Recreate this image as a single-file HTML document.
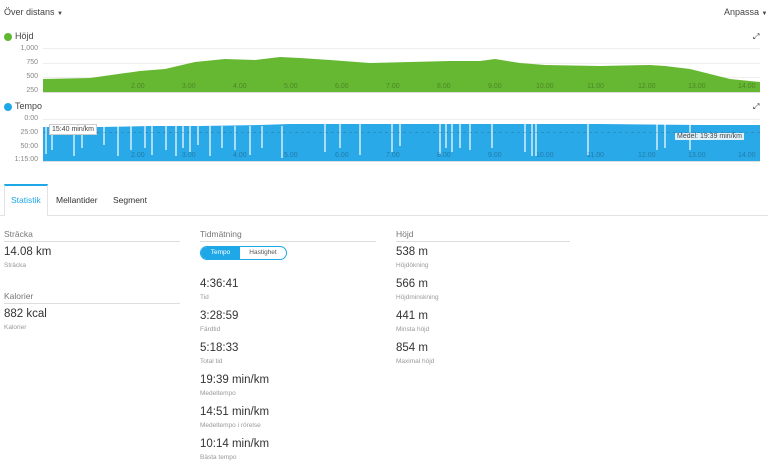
<!DOCTYPE html>
<html><head><meta charset="utf-8"><style>
*{margin:0;padding:0;box-sizing:border-box}
body{width:768px;height:476px;background:#fff;font-family:"Liberation Sans",sans-serif;color:#333;position:relative;overflow:hidden}
.a{position:absolute;white-space:nowrap}
.t{font-size:9px;color:#444}
.yl{font-size:7px;color:#888;text-align:right;width:36px;left:2px}
.xl{font-size:7px;color:rgba(0,0,0,0.28)}
.hd{font-size:8.5px;color:#777;border-bottom:1px solid #ddd;padding-bottom:2px}
.v{font-size:11.5px;color:#333}
.l{font-size:6.5px;color:#999}
.dot{width:8px;height:8px;border-radius:50%}
</style></head><body>
<div class="a t" style="left:4px;top:7px">Över distans <span style="font-size:6px">▼</span></div>
<div class="a t" style="left:724px;top:7px">Anpassa <span style="font-size:6px">▼</span></div>

<div class="a dot" style="left:4px;top:33px;background:#5fb832"></div>
<div class="a t" style="left:15px;top:31px">Höjd</div>
<div class="a" style="left:753px;top:32px;font-size:8px;color:#222">⤢</div>
<div class="a yl" style="top:45px">1,000</div>
<div class="a yl" style="top:59px">750</div>
<div class="a yl" style="top:73px">500</div>
<div class="a yl" style="top:87px">250</div>

<div class="a dot" style="left:4px;top:103px;background:#1ea8e8"></div>
<div class="a t" style="left:15px;top:101px">Tempo</div>
<div class="a" style="left:753px;top:102px;font-size:8px;color:#222">⤢</div>
<div class="a yl" style="top:115px">0:00</div>
<div class="a yl" style="top:129px">25:00</div>
<div class="a yl" style="top:143px">50:00</div>
<div class="a yl" style="top:156px">1:15:00</div>

<svg class="a" style="left:0;top:0" width="768" height="170">
<g stroke="#eee" stroke-width="1">
<line x1="43" y1="48.5" x2="760" y2="48.5"/><line x1="43" y1="63.5" x2="760" y2="63.5"/><line x1="43" y1="77.5" x2="760" y2="77.5"/>
<line x1="43" y1="119.5" x2="760" y2="119.5"/><line x1="43" y1="133.5" x2="760" y2="133.5"/><line x1="43" y1="147.5" x2="760" y2="147.5"/>
</g>
<path fill="#66b832" d="M43,79 L90,78 L140,71 L165,69 L195,62 L225,59 L255,60 L280,57 L300,58 L330,60 L370,63 L410,62 L450,61 L480,61 L495,59 L520,63 L545,65 L600,66 L650,65 L665,66 L690,69 L710,74 L730,79 L750,81 L760,82 L760,92 L43,92 Z"/>
<path fill="#2aa9e8" d="M43,127 L100,127 L150,126 L200,126 L260,125 L290,124 L400,124 L500,124 L600,124 L700,125 L760,125 L760,161 L43,161 Z"/>
<g stroke="#fff" stroke-width="1.2">
<line x1="46" y1="126" x2="46" y2="154"/><line x1="52" y1="126" x2="52" y2="150"/><line x1="74" y1="126" x2="74" y2="156"/><line x1="82" y1="126" x2="82" y2="148"/><line x1="104" y1="126" x2="104" y2="145"/><line x1="118" y1="126" x2="118" y2="156"/><line x1="131" y1="126" x2="131" y2="150"/><line x1="145" y1="126" x2="145" y2="148"/><line x1="152" y1="126" x2="152" y2="155"/><line x1="166" y1="126" x2="166" y2="150"/><line x1="176" y1="126" x2="176" y2="156"/><line x1="183" y1="126" x2="183" y2="148"/><line x1="190" y1="126" x2="190" y2="152"/><line x1="198" y1="126" x2="198" y2="145"/><line x1="210" y1="126" x2="210" y2="156"/><line x1="222" y1="126" x2="222" y2="148"/><line x1="235" y1="126" x2="235" y2="150"/><line x1="250" y1="126" x2="250" y2="155"/><line x1="262" y1="126" x2="262" y2="148"/><line x1="282" y1="126" x2="282" y2="158"/><line x1="325" y1="124" x2="325" y2="152"/><line x1="340" y1="124" x2="340" y2="148"/><line x1="360" y1="124" x2="360" y2="155"/><line x1="392" y1="124" x2="392" y2="152"/><line x1="400" y1="124" x2="400" y2="146"/><line x1="440" y1="124" x2="440" y2="154"/><line x1="446" y1="124" x2="446" y2="148"/><line x1="452" y1="124" x2="452" y2="152"/><line x1="460" y1="124" x2="460" y2="148"/><line x1="470" y1="124" x2="470" y2="150"/><line x1="492" y1="124" x2="492" y2="148"/><line x1="525" y1="124" x2="525" y2="152"/><line x1="532" y1="124" x2="532" y2="156"/><line x1="536" y1="124" x2="536" y2="156"/><line x1="588" y1="124" x2="588" y2="155"/><line x1="657" y1="124" x2="657" y2="150"/><line x1="665" y1="124" x2="665" y2="148"/><line x1="690" y1="124" x2="690" y2="150"/>
</g>
<line x1="43" y1="132.5" x2="760" y2="132.5" stroke="#444" stroke-dasharray="3,3" stroke-width="0.6" opacity="0.5"/>
<line x1="43" y1="92.5" x2="760" y2="92.5" stroke="#ddd"/>
<line x1="43" y1="161.5" x2="760" y2="161.5" stroke="#ddd"/>
</svg>
<div class="a" style="left:49px;top:124px;background:#fff;border:1px solid #ccc;font-size:7px;color:#444;padding:1px 2px">15:40 min/km</div>
<div class="a" style="left:675px;top:133px;background:rgba(255,255,255,.85);font-size:7px;color:#444;padding:0 2px">Medel: 19:39 min/km</div>

<div class="a xl" style="left:131px;top:83px">2.00</div><div class="a xl" style="left:182px;top:83px">3.00</div><div class="a xl" style="left:233px;top:83px">4.00</div><div class="a xl" style="left:284px;top:83px">5.00</div><div class="a xl" style="left:335px;top:83px">6.00</div><div class="a xl" style="left:386px;top:83px">7.00</div><div class="a xl" style="left:437px;top:83px">8.00</div><div class="a xl" style="left:488px;top:83px">9.00</div><div class="a xl" style="left:536px;top:83px">10.00</div><div class="a xl" style="left:587px;top:83px">11.00</div><div class="a xl" style="left:638px;top:83px">12.00</div><div class="a xl" style="left:688px;top:83px">13.00</div><div class="a xl" style="left:738px;top:83px">14.00</div>
<div class="a xl" style="left:131px;top:152px">2.00</div><div class="a xl" style="left:182px;top:152px">3.00</div><div class="a xl" style="left:233px;top:152px">4.00</div><div class="a xl" style="left:284px;top:152px">5.00</div><div class="a xl" style="left:335px;top:152px">6.00</div><div class="a xl" style="left:386px;top:152px">7.00</div><div class="a xl" style="left:437px;top:152px">8.00</div><div class="a xl" style="left:488px;top:152px">9.00</div><div class="a xl" style="left:536px;top:152px">10.00</div><div class="a xl" style="left:587px;top:152px">11.00</div><div class="a xl" style="left:638px;top:152px">12.00</div><div class="a xl" style="left:688px;top:152px">13.00</div><div class="a xl" style="left:738px;top:152px">14.00</div>

<!-- tabs -->
<div class="a" style="left:0;top:215px;width:768px;border-top:1px solid #e3e3e3"></div>
<div class="a" style="left:4px;top:184px;width:44px;height:32px;background:#fff;border:1px solid #e3e3e3;border-bottom:none;border-top:2px solid #1ea8e8"></div>
<div class="a" style="left:11px;top:195px;font-size:8.5px;color:#1ea8e8">Statistik</div>
<div class="a" style="left:56px;top:195px;font-size:8.5px;color:#333">Mellantider</div>
<div class="a" style="left:113px;top:195px;font-size:8.5px;color:#333">Segment</div>

<!-- col1 -->
<div class="a hd" style="left:4px;top:229px;width:176px">Sträcka</div>
<div class="a v" style="left:4px;top:246px">14.08 km</div>
<div class="a l" style="left:4px;top:262px">Sträcka</div>
<div class="a hd" style="left:4px;top:291px;width:176px">Kalorier</div>
<div class="a v" style="left:4px;top:308px">882 kcal</div>
<div class="a l" style="left:4px;top:324px">Kalorier</div>

<!-- col2 -->
<div class="a hd" style="left:200px;top:229px;width:176px">Tidmätning</div>
<div class="a" style="left:200px;top:246px;width:87px;height:14px;border:1px solid #1ea8e8;border-radius:7px;overflow:hidden;font-size:6.5px">
<div class="a" style="left:0;top:0;width:39px;height:12px;background:#1ea8e8;color:#fff;text-align:center;line-height:12px">Tempo</div>
<div class="a" style="left:39px;top:0;width:46px;height:12px;color:#555;text-align:center;line-height:12px">Hastighet</div></div>
<div class="a v" style="left:200px;top:278px">4:36:41</div><div class="a l" style="left:200px;top:294px">Tid</div>
<div class="a v" style="left:200px;top:310px">3:28:59</div><div class="a l" style="left:200px;top:326px">Färdtid</div>
<div class="a v" style="left:200px;top:342px">5:18:33</div><div class="a l" style="left:200px;top:358px">Total tid</div>
<div class="a v" style="left:200px;top:374px">19:39 min/km</div><div class="a l" style="left:200px;top:390px">Medeltempo</div>
<div class="a v" style="left:200px;top:406px">14:51 min/km</div><div class="a l" style="left:200px;top:422px">Medeltempo i rörelse</div>
<div class="a v" style="left:200px;top:438px">10:14 min/km</div><div class="a l" style="left:200px;top:454px">Bästa tempo</div>

<!-- col3 -->
<div class="a hd" style="left:396px;top:229px;width:174px">Höjd</div>
<div class="a v" style="left:396px;top:246px">538 m</div><div class="a l" style="left:396px;top:262px">Höjdökning</div>
<div class="a v" style="left:396px;top:278px">566 m</div><div class="a l" style="left:396px;top:294px">Höjdminskning</div>
<div class="a v" style="left:396px;top:310px">441 m</div><div class="a l" style="left:396px;top:326px">Minsta höjd</div>
<div class="a v" style="left:396px;top:342px">854 m</div><div class="a l" style="left:396px;top:358px">Maximal höjd</div>
</body></html>
